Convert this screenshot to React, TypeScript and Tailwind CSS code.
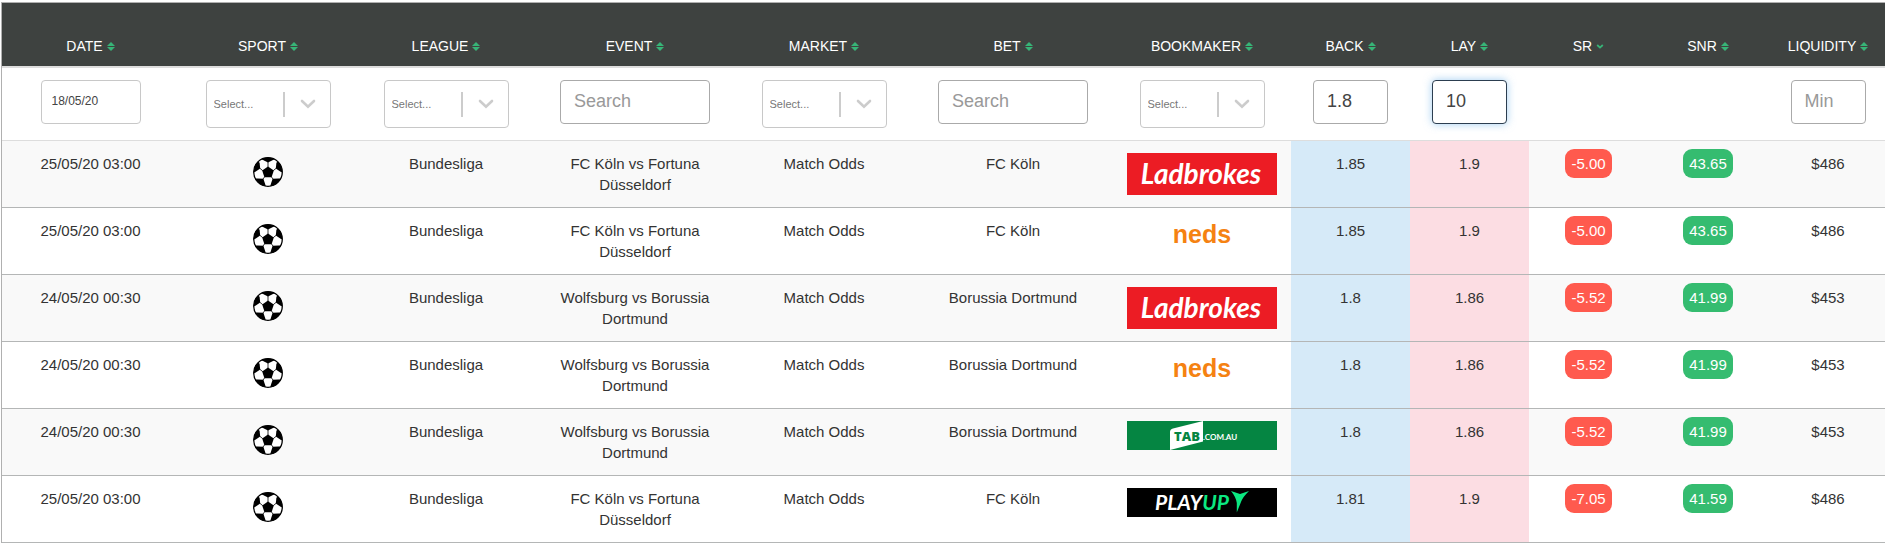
import { useState } from 'react'
import clsx from 'clsx'

type FilterKind = 'date' | 'select' | 'search' | 'odds' | 'min' | 'none'
type Bookmaker = 'ladbrokes' | 'neds' | 'tab' | 'playup'

const COLUMNS: { id: string; label: string; width: string; filter: FilterKind }[] = [
  { id: 'date',      label: 'DATE',      width: 'w-[177px]', filter: 'date' },
  { id: 'sport',     label: 'SPORT',     width: 'w-[178px]', filter: 'select' },
  { id: 'league',    label: 'LEAGUE',    width: 'w-[178px]', filter: 'select' },
  { id: 'event',     label: 'EVENT',     width: 'w-[200px]', filter: 'search' },
  { id: 'market',    label: 'MARKET',    width: 'w-[178px]', filter: 'select' },
  { id: 'bet',       label: 'BET',       width: 'w-[200px]', filter: 'search' },
  { id: 'bookmaker', label: 'BOOKMAKER', width: 'w-[178px]', filter: 'select' },
  { id: 'back',      label: 'BACK',      width: 'w-[119px]', filter: 'odds' },
  { id: 'lay',       label: 'LAY',       width: 'w-[119px]', filter: 'odds' },
  { id: 'sr',        label: 'SR',        width: 'w-[119px]', filter: 'none' },
  { id: 'snr',       label: 'SNR',       width: 'w-[120px]', filter: 'none' },
  { id: 'liquidity', label: 'LIQUIDITY', width: 'w-[120px]', filter: 'min' },
]

interface Row {
  date: string
  event: string
  bet: string
  bookmaker: Bookmaker
  back: string
  lay: string
  sr: string
  snr: string
  liquidity: string
}

const KOLN = { date: '25/05/20 03:00', event: 'FC Köln vs Fortuna Düsseldorf', bet: 'FC Köln', liquidity: '$486' }
const WOLFSBURG = { date: '24/05/20 00:30', event: 'Wolfsburg vs Borussia Dortmund', bet: 'Borussia Dortmund', liquidity: '$453' }

const ROWS: Row[] = [
  { ...KOLN,      bookmaker: 'ladbrokes', back: '1.85', lay: '1.9',  sr: '-5.00', snr: '43.65' },
  { ...KOLN,      bookmaker: 'neds',      back: '1.85', lay: '1.9',  sr: '-5.00', snr: '43.65' },
  { ...WOLFSBURG, bookmaker: 'ladbrokes', back: '1.8',  lay: '1.86', sr: '-5.52', snr: '41.99' },
  { ...WOLFSBURG, bookmaker: 'neds',      back: '1.8',  lay: '1.86', sr: '-5.52', snr: '41.99' },
  { ...WOLFSBURG, bookmaker: 'tab',       back: '1.8',  lay: '1.86', sr: '-5.52', snr: '41.99' },
  { ...KOLN,      bookmaker: 'playup',    back: '1.81', lay: '1.9',  sr: '-7.05', snr: '41.59' },
]

function SortIcon({ active }: { active: boolean }) {
  if (active) {
    return (
      <svg className="w-2 h-[9px]" viewBox="0 0 8 9" fill="none" stroke="#37b477" strokeWidth="1.8">
        <path d="M1.2 3 L4 5.6 L6.8 3" />
      </svg>
    )
  }
  return (
    <svg className="w-2 h-[9px]" viewBox="0 0 8 9" fill="#37b477">
      <path d="M0 4.1 L4 0 L8 4.1 Z" />
      <path d="M0 4.9 L4 9 L8 4.9 Z" />
    </svg>
  )
}

function FootballIcon() {
  return (
    <svg className="mt-1 mx-auto w-[30px] h-[30px]" viewBox="0 0 30 30" role="img" aria-label="Football">
      <circle cx="15" cy="15" r="14.3" fill="#fff" stroke="#000" strokeWidth="1.3" />
      <path d="M15 9.6 L20.8 13.4 L18.6 20.2 H11.4 L9.2 13.4 Z" />
      <path d="M8.2 2.2 Q15 -1.2 21.8 2.2 L20 3 L15 5.4 L10 3 Z" />
      <path d="M5.2 4.4 L6.6 5.8 L7.2 11.6 L2.4 14.8 L0.7 15.4 Q0.4 8.6 5.2 4.4 Z" />
      <path d="M24.8 4.4 L23.4 5.8 L22.8 11.6 L27.6 14.8 L29.3 15.4 Q29.6 8.6 24.8 4.4 Z" />
      <path d="M2 21.4 L4.4 21.4 L10.4 21.8 L12.2 27.2 L12.8 29.3 Q6 28.2 2 21.4 Z" />
      <path d="M28 21.4 L25.6 21.4 L19.6 21.8 L17.8 27.2 L17.2 29.3 Q24 28.2 28 21.4 Z" />
      <path
        d="M15 5 V10 M7 11.4 L9.8 13.7 M23 11.4 L20.2 13.7 M10 22 L11.8 19.6 M20 22 L18.2 19.6"
        stroke="#000"
        strokeWidth="0.8"
      />
    </svg>
  )
}

function BookmakerLogo({ name }: { name: Bookmaker }) {
  switch (name) {
    case 'ladbrokes':
      return (
        <svg className="mx-auto w-[150px] h-[42px] font-['Lato',sans-serif]" viewBox="0 0 150 42">
          <rect width="150" height="42" fill="#ec1c24" />
          <text x="74" y="31" textAnchor="middle" fontSize="28" fontWeight="700" fontStyle="italic" fill="#fff">Ladbrokes</text>
        </svg>
      )
    case 'neds':
      return (
        <svg className="mx-auto w-[150px] h-[42px] font-['Liberation_Sans',sans-serif]" viewBox="0 0 150 42">
          <text x="75" y="23" textAnchor="middle" fontSize="25" fontWeight="700" fill="#f58212">neds</text>
        </svg>
      )
    case 'tab':
      return (
        <svg className="mx-auto w-[150px] h-[29px]" viewBox="0 0 150 29">
          <rect width="150" height="29" fill="#058542" />
          <path d="M43 11 Q43 8.5 46 7.6 L76 0 V20.5 L43 29 Z" fill="#fff" />
          <text className="font-['Open_Sans',sans-serif]" x="60" y="20" textAnchor="middle" fontSize="13" fontWeight="800" fill="#058542">TAB</text>
          <text className="font-['Lato',sans-serif]" x="76" y="19" fontSize="8" fontWeight="700" fill="#fff">.COM.AU</text>
        </svg>
      )
    case 'playup':
      return (
        <svg className="mx-auto w-[150px] h-[29px] font-['Lato',sans-serif]" viewBox="0 0 150 29">
          <rect width="150" height="29" fill="#000" />
          <text x="28" y="22" fontSize="21" fontStyle="italic" fontWeight="700" fill="#fff">
            PLAY<tspan fill="#0be881">UP</tspan>
          </text>
          <path d="M104 3 L113 6 L122 3 Q116 9 114.4 13 L109.8 24.5 V15 Q109 9 104 3 Z" fill="#0be881" />
        </svg>
      )
  }
}

function SelectFilter({ label }: { label: string }) {
  return (
    <div className="relative mx-auto w-[125px] h-12">
      <select
        aria-label={label}
        className="appearance-none w-full h-full rounded border border-[#c8c8c8] bg-white pl-[7px] text-[11px] text-[#777]"
      >
        <option>Select...</option>
      </select>
      <div className="absolute inset-y-0 right-0 flex items-center gap-[15px] pr-[15px] pointer-events-none">
        <span className="w-[2px] h-[25px] bg-[#ccc]" />
        <svg className="w-4 h-[10px]" viewBox="0 0 16 10" fill="none" stroke="#ccc" strokeWidth="2.6" strokeLinecap="round">
          <path d="M2 2 L8 7.6 L14 2" />
        </svg>
      </div>
    </div>
  )
}

const INPUT = 'block mx-auto h-11 rounded border bg-white outline-none text-[#444] placeholder:text-[#999]'

function Filter({ id, label, kind }: { id: string; label: string; kind: FilterKind }) {
  switch (kind) {
    case 'date':
      return <input aria-label={label} defaultValue="18/05/20" className={clsx(INPUT, 'w-[100px] border-[#c8c8c8] px-[10px] pb-[2px] text-xs')} />
    case 'select':
      return <SelectFilter label={label} />
    case 'search':
      return <input aria-label={label} placeholder="Search" className={clsx(INPUT, 'w-[150px] border-[#aaa] px-[13px] pb-[2px] text-lg')} />
    case 'odds':
      return (
        <input
          aria-label={label}
          defaultValue={id === 'back' ? '1.8' : '10'}
          className={clsx(
            INPUT,
            'w-[75px] px-[13px] pb-[2px] text-lg',
            id === 'lay' ? 'border-[#2c3e50] shadow-[0_0_8px_rgba(102,175,233,0.6)]' : 'border-[#aaa]',
          )}
        />
      )
    case 'min':
      return <input aria-label={label} placeholder="Min" className={clsx(INPUT, 'w-[75px] border-[#aaa] px-[13px] pb-[2px] text-lg')} />
    default:
      return null
  }
}

function Badge({ value, tone }: { value: string; tone: 'red' | 'green' }) {
  return (
    <span className={clsx(
      '-my-1 inline-block rounded-[9px] px-[6px] py-1 text-white',
      tone === 'red' ? 'bg-[#ff5a4e]' : 'bg-[#35bc70]',
    )}>
      {value}
    </span>
  )
}

const CELL = 'border-b border-[#b4b6b6] py-3'

export default function App() {
  const [sortBy, setSortBy] = useState('sr')

  return (
    <div className="overflow-hidden bg-white pt-[2px] pl-px font-['Liberation_Sans',Arial,sans-serif] text-[15px] leading-[21px] text-[#333]">
      {/* the last column runs slightly past the edge of the window */}
      <table className="w-[calc(100%+3px)] table-fixed border-separate border-spacing-0 border-t border-l border-[#b0b0b0] text-center">
        <thead>
          <tr>
            {COLUMNS.map(c => (
              <th key={c.id} scope="col" className={clsx(c.width, 'border-b-2 border-[#ddd] bg-[#3e4240] pt-[33px] pb-[9px] font-normal')}>
                <button
                  type="button"
                  onClick={() => setSortBy(c.id)}
                  className="mx-auto flex items-center gap-1 text-sm leading-[21px] text-white"
                >
                  {c.label}
                  <SortIcon active={sortBy === c.id} />
                </button>
              </th>
            ))}
          </tr>
          <tr>
            {COLUMNS.map(c => (
              <td key={c.id} className="border-b border-[#ddd] py-3 align-top">
                <Filter id={c.id} label={c.label} kind={c.filter} />
              </td>
            ))}
          </tr>
        </thead>
        <tbody>
          {ROWS.map((r, i) => (
            <tr key={i} className="align-top odd:bg-[#f9f9f9]">
              <td className={CELL}>{r.date}</td>
              <td className={CELL}><FootballIcon /></td>
              <td className={CELL}>Bundesliga</td>
              <td className={clsx(CELL, 'px-5')}>{r.event}</td>
              <td className={CELL}>Match Odds</td>
              <td className={CELL}>{r.bet}</td>
              <td className={CELL}><BookmakerLogo name={r.bookmaker} /></td>
              <td className={clsx(CELL, 'bg-[#d6eaf8]')}>{r.back}</td>
              <td className={clsx(CELL, 'bg-[#fcdde3]')}>{r.lay}</td>
              <td className={CELL}><Badge value={r.sr} tone="red" /></td>
              <td className={CELL}><Badge value={r.snr} tone="green" /></td>
              <td className={CELL}>{r.liquidity}</td>
            </tr>
          ))}
        </tbody>
      </table>
    </div>
  )
}
